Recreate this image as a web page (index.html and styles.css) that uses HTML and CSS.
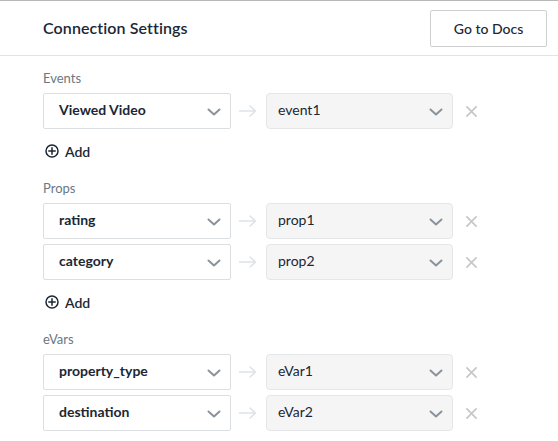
FILE: index.html
```html
<!DOCTYPE html>
<html lang="en">
<head>
<meta charset="utf-8">
<title>Connection Settings</title>
<link rel="stylesheet" href="styles.css">
</head>
<body>
<div class="page">
  <header class="header">
    <h1 class="title">Connection Settings</h1>
    <button class="docs-btn" type="button">Go to Docs</button>
  </header>
  <main class="content">
    <section class="group">
      <div class="group-label">Events</div>
      <div class="rows">
        <div class="row">
          <div class="select src"><span class="val">Viewed Video</span><svg class="chev" viewBox="0 0 14 8"><path d="M1.5 1.5 L7 6.5 L12.5 1.5"/></svg></div>
          <svg class="arrow" viewBox="0 0 18 12"><path d="M0 6 H16 M11 1 L16.5 6 L11 11"/></svg>
          <div class="select dst"><span class="val">event1</span><svg class="chev" viewBox="0 0 14 8"><path d="M1.5 1.5 L7 6.5 L12.5 1.5"/></svg></div>
          <svg class="remove" viewBox="0 0 12 12"><path d="M1 1 L11 11 M11 1 L1 11"/></svg>
        </div>
      </div>
      <div class="add"><svg class="plus" viewBox="0 0 14 14"><circle cx="7" cy="7" r="6"/><path d="M7 3.8 V10.2 M3.8 7 H10.2"/></svg><span>Add</span></div>
    </section>
    <section class="group">
      <div class="group-label">Props</div>
      <div class="rows">
        <div class="row">
          <div class="select src"><span class="val">rating</span><svg class="chev" viewBox="0 0 14 8"><path d="M1.5 1.5 L7 6.5 L12.5 1.5"/></svg></div>
          <svg class="arrow" viewBox="0 0 18 12"><path d="M0 6 H16 M11 1 L16.5 6 L11 11"/></svg>
          <div class="select dst"><span class="val">prop1</span><svg class="chev" viewBox="0 0 14 8"><path d="M1.5 1.5 L7 6.5 L12.5 1.5"/></svg></div>
          <svg class="remove" viewBox="0 0 12 12"><path d="M1 1 L11 11 M11 1 L1 11"/></svg>
        </div>
        <div class="row">
          <div class="select src"><span class="val">category</span><svg class="chev" viewBox="0 0 14 8"><path d="M1.5 1.5 L7 6.5 L12.5 1.5"/></svg></div>
          <svg class="arrow" viewBox="0 0 18 12"><path d="M0 6 H16 M11 1 L16.5 6 L11 11"/></svg>
          <div class="select dst"><span class="val">prop2</span><svg class="chev" viewBox="0 0 14 8"><path d="M1.5 1.5 L7 6.5 L12.5 1.5"/></svg></div>
          <svg class="remove" viewBox="0 0 12 12"><path d="M1 1 L11 11 M11 1 L1 11"/></svg>
        </div>
      </div>
      <div class="add"><svg class="plus" viewBox="0 0 14 14"><circle cx="7" cy="7" r="6"/><path d="M7 3.8 V10.2 M3.8 7 H10.2"/></svg><span>Add</span></div>
    </section>
    <section class="group">
      <div class="group-label">eVars</div>
      <div class="rows">
        <div class="row">
          <div class="select src"><span class="val">property_type</span><svg class="chev" viewBox="0 0 14 8"><path d="M1.5 1.5 L7 6.5 L12.5 1.5"/></svg></div>
          <svg class="arrow" viewBox="0 0 18 12"><path d="M0 6 H16 M11 1 L16.5 6 L11 11"/></svg>
          <div class="select dst"><span class="val">eVar1</span><svg class="chev" viewBox="0 0 14 8"><path d="M1.5 1.5 L7 6.5 L12.5 1.5"/></svg></div>
          <svg class="remove" viewBox="0 0 12 12"><path d="M1 1 L11 11 M11 1 L1 11"/></svg>
        </div>
        <div class="row">
          <div class="select src"><span class="val">destination</span><svg class="chev" viewBox="0 0 14 8"><path d="M1.5 1.5 L7 6.5 L12.5 1.5"/></svg></div>
          <svg class="arrow" viewBox="0 0 18 12"><path d="M0 6 H16 M11 1 L16.5 6 L11 11"/></svg>
          <div class="select dst"><span class="val">eVar2</span><svg class="chev" viewBox="0 0 14 8"><path d="M1.5 1.5 L7 6.5 L12.5 1.5"/></svg></div>
          <svg class="remove" viewBox="0 0 12 12"><path d="M1 1 L11 11 M11 1 L1 11"/></svg>
        </div>
      </div>
    </section>
  </main>
</div>
</body>
</html>
```
FILE: styles.css
```css
* { box-sizing: border-box; }
html, body { margin: 0; padding: 0; background: #fff; }
body {
  font-family: Lato, "Noto Sans", "Liberation Sans", sans-serif;
  color: #1b2734;
  -webkit-font-smoothing: antialiased;
}
.page {
  width: 558px;
  height: 441px;
  overflow: hidden;
  border-top: 1px solid #b8b8b8;
}
.header {
  height: 55px;
  display: flex;
  align-items: center;
  justify-content: space-between;
  padding: 0 11px 0 43px;
  border-bottom: 1px solid #e3e3e3;
}
.title {
  margin: 0 0 2px 0;
  font-size: 16px;
  font-weight: 600;
  letter-spacing: 0.1px;
  color: #1b2734;
}
.docs-btn {
  width: 117px;
  height: 37px;
  margin-top: 1px;
  background: #fff;
  border: 1px solid #cfcfcf;
  border-radius: 2px;
  font-family: inherit;
  font-size: 14px;
  font-weight: 500;
  color: #1b2734;
  padding: 0 0 1px 0;
}
.content {
  padding: 14px 0 0 43px;
}
.group-label {
  font-size: 13px;
  line-height: 16px;
  color: #6b7783;
  margin-bottom: 7px;
}
.rows {
  display: flex;
  flex-direction: column;
  gap: 5px;
}
.row {
  display: flex;
  align-items: center;
  height: 36px;
}
.select {
  height: 36px;
  display: flex;
  align-items: center;
  justify-content: space-between;
  font-size: 14px;
}
.select .val {
  white-space: nowrap;
  margin-bottom: 3px;
}
.select .chev { margin-top: 1px; }
.select.src {
  width: 188px;
  border: 1px solid #dcdfe2;
  border-radius: 2px;
  background: #fff;
  padding: 0 9px 0 15px;
  font-weight: 700;
}
.select.dst {
  width: 187px;
  border: 1px solid #e4e6e8;
  border-radius: 4px;
  background: #f5f5f5;
  padding: 0 9px 0 11px;
}
.chev {
  width: 14px;
  height: 8px;
  fill: none;
  stroke: #8a939b;
  stroke-width: 2;
  stroke-linecap: round;
  stroke-linejoin: round;
}
.arrow {
  width: 18px;
  height: 12px;
  margin: 0 9px 0 8px;
  fill: none;
  stroke: #dfe3e7;
  stroke-width: 1.6;
  stroke-linecap: round;
  stroke-linejoin: round;
}
.remove {
  width: 11px;
  height: 11px;
  margin-left: 13px;
  fill: none;
  stroke: #c6c6c6;
  stroke-width: 1.8;
  stroke-linecap: round;
}
.add {
  display: flex;
  align-items: center;
  height: 20px;
  margin-top: 12px;
  margin-bottom: 19px;
  font-size: 14px;
  font-weight: 600;
  color: #1b2734;
}
.plus {
  width: 14px;
  height: 14px;
  margin-left: 2px;
  margin-right: 6px;
  fill: none;
  stroke: #1b2734;
  stroke-width: 1.5;
  stroke-linecap: round;
}
```
